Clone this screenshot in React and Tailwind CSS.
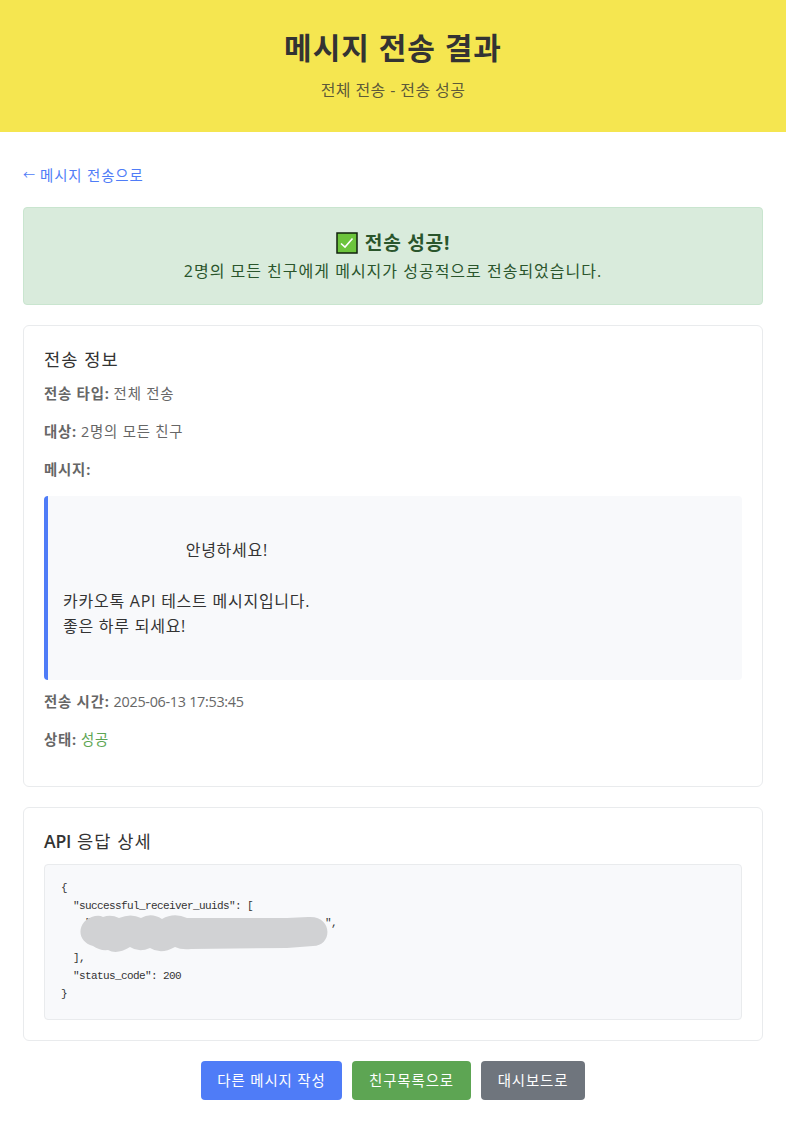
import React from "react";
import clsx from "clsx";

const message = `
                         안녕하세요!

카카오톡 API 테스트 메시지입니다.
좋은 하루 되세요!
 `;

const actions = [
  { label: "다른 메시지 작성", className: "bg-[#4f7cf7] w-[141px]" },
  { label: "친구목록으로", className: "bg-[#5da553] w-[119px]" },
  { label: "대시보드로", className: "bg-[#6f757d] w-[104px]" },
];

function InfoRow({ label, children }) {
  return (
    <p className="mb-[15px] text-[14.4px] leading-[23px] tracking-[0.8px] text-[#666]">
      <strong className="font-bold">{label}:</strong>
      <span className="ml-1">{children}</span>
    </p>
  );
}

function Card({ title, className, children }) {
  return (
    <section
      className={clsx(
        "mb-5 rounded-md border border-[#e9ebed] bg-white px-5 pt-[19px] pb-5",
        className
      )}
    >
      <h2 className="mb-[9px] text-[17.6px] leading-[28px] tracking-[1.1px]">
        {title}
      </h2>
      {children}
    </section>
  );
}

function CheckMark() {
  return (
    <svg viewBox="0 0 22 22" className="mr-[7px] h-[22px] w-[22px]">
      <rect x="1" y="1" width="20" height="20" fill="#6cc43c" stroke="#10220c" strokeWidth="1.5" />
      <path d="M5 11.5 9 15 16.5 6.5" fill="none" stroke="#fff" strokeWidth="1.6" />
    </svg>
  );
}

export default function App() {
  return (
    <div className="min-h-[1125px] bg-white font-['Open_Sans','Noto_Sans_CJK_KR',sans-serif] text-[#333]">
      {/* Header */}
      <header className="h-[132px] bg-[#f5e650] pt-[22px] text-center">
        <h1 className="text-[30px] leading-[51px] font-bold tracking-[1px]">
          메시지 전송 결과
        </h1>
        <p className="mt-1 text-[16px] leading-[26px] tracking-[0.4px] text-[#333]/80">
          전체 전송 - 전송 성공
        </p>
      </header>

      <main className="px-[23px] pt-8">
        <a
          href="#"
          className="mb-5 flex text-[14.4px] leading-[23px] tracking-[0.9px] text-[#4f7cf7]"
        >
          <span className="w-[17px] text-[12px]">←</span>
          메시지 전송으로
        </a>

        {/* Result */}
        <div className="mb-5 h-[98px] rounded border border-[#c9e5cf] bg-[#d9ebdc] pt-5 text-center text-[#2a552c]">
          <h3 className="flex items-center justify-center text-[19.2px] leading-[30px] font-bold tracking-[0.7px]">
            <CheckMark />
            전송 성공!
          </h3>
          <p className="text-[16px] leading-[26px] tracking-[1px]">
            2명의 모든 친구에게 메시지가 성공적으로 전송되었습니다.
          </p>
        </div>

        {/* Details */}
        <Card title="전송 정보" className="h-[462px]">
          <InfoRow label="전송 타입">전체 전송</InfoRow>
          <InfoRow label="대상">2명의 모든 친구</InfoRow>
          <InfoRow label="메시지" />
          <div className="mb-[10px] h-[184px] rounded border-l-4 border-[#4f7cf7] bg-[#f8f9fb] px-[15px] pt-4 text-[16px] leading-[25.6px] tracking-[0.75px] whitespace-pre-wrap">
            {message}
          </div>
          <InfoRow label="전송 시간">
            <span className="tracking-[-0.3px]">2025-06-13 17:53:45</span>
          </InfoRow>
          <InfoRow label="상태">
            <span className="text-[#5da553]">성공</span>
          </InfoRow>
        </Card>

        {/* API response */}
        <Card
          title={
            <>
              <span className="font-semibold tracking-[-0.2px]">API</span> 응답
              상세
            </>
          }
          className="h-[234px]"
        >
          <pre className="relative h-[156px] rounded border border-[#e9ebed] bg-[#f8f9fb] px-4 py-[15px] font-['Liberation_Mono','Noto_Sans_CJK_KR',monospace] text-[11px] leading-[17.6px] tracking-[-0.6px]">
            {`{
  "successful_receiver_uuids": [
    "                                       ",

  ],
  "status_code": 200
}`}
            {/* Masked recipient id */}
            <svg
              viewBox="0 0 250 38"
              className="absolute top-[50px] left-[34px] h-[38px] w-[250px]"
            >
              <path
                d="M16 1Q21 0 24 2Q32-1 40 3Q52-2 62 3Q72-3 83 4Q95-3 108 3L208 3L229 2C254 0 254 31 234 31L208 33L112 34Q102 35 96 32Q82 40 71 33Q60 38 51 32Q38 40 29 35Q21 36 14 31C-4 26-2 5 16 1Z"
                fill="#d1d2d4"
              />
            </svg>
          </pre>
        </Card>

        {/* Actions */}
        <div className="flex justify-center gap-[10px]">
          {actions.map((a) => (
            <button
              key={a.label}
              className={clsx(
                "h-[39px] rounded text-[14.4px] tracking-[0.9px] whitespace-nowrap text-white",
                a.className
              )}
            >
              {a.label}
            </button>
          ))}
        </div>
      </main>
    </div>
  );
}
